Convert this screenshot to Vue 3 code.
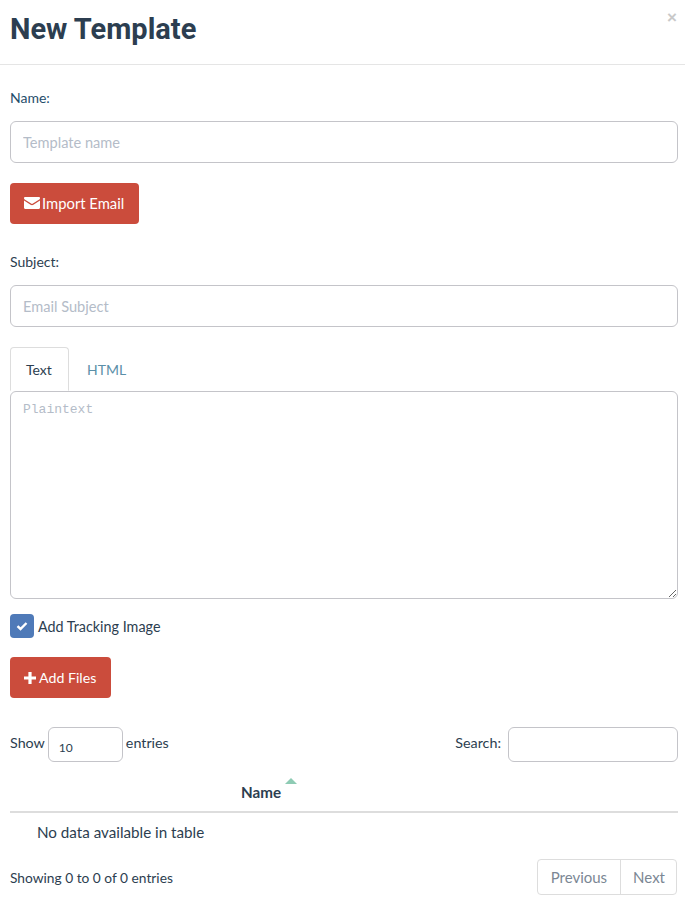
<template>
  <div class="modal">
    <!-- header -->
    <div class="modal-header">
      <h1 class="title">New Template</h1>
      <span class="close">×</span>
    </div>

    <div class="modal-body">
      <label class="label name-label">Name:</label>
      <input class="control" type="text" placeholder="Template name" />

      <button class="btn btn-import" type="button">
        <svg class="icon-mail" viewBox="0 0 16 12" width="16" height="12">
          <path d="M0 1.2C0 .5.5 0 1.2 0h13.6c.7 0 1.2.5 1.2 1.2 0 .5-.3.9-.7 1.2L8.9 6.6c-.6.4-1.2.4-1.8 0L.7 2.4C.3 2.1 0 1.7 0 1.2z" fill="#fff" />
          <path d="M0 3.4 6.6 7.8c.9.6 1.9.6 2.8 0L16 3.4v7.4c0 .7-.5 1.2-1.2 1.2H1.2C.5 12 0 11.5 0 10.8z" fill="#fff" />
        </svg>
        <span>Import Email</span>
      </button>

      <label class="label subject-label">Subject:</label>
      <input class="control" type="text" placeholder="Email Subject" />

      <!-- tabs -->
      <div class="tabs">
        <a class="tab active">Text</a>
        <a class="tab">HTML</a>
      </div>
      <textarea class="plaintext" placeholder="Plaintext"></textarea>

      <div class="check-row">
        <span class="checkbox">
          <svg viewBox="0 0 12 10" width="12" height="10">
            <path d="M1.5 5.2 4.5 8 10.5 2" fill="none" stroke="#fff" stroke-width="2.4" />
          </svg>
        </span>
        <span class="check-label">Add Tracking Image</span>
      </div>

      <button class="btn btn-files" type="button">
        <svg viewBox="0 0 12 12" width="12" height="12">
          <path d="M4.4 0h3.2v4.4H12v3.2H7.6V12H4.4V7.6H0V4.4h4.4z" fill="#fff" />
        </svg>
        <span>Add Files</span>
      </button>

      <!-- datatable -->
      <div class="dt-top">
        <div class="dt-length">
          <span class="dt-text">Show</span>
          <div class="length-box">10</div>
          <span class="dt-text">entries</span>
        </div>
        <div class="dt-search">
          <span class="dt-text">Search:</span>
          <input class="search-input" type="text" />
        </div>
      </div>

      <div class="table-head">
        <span class="th-name">Name<i class="sort-arrow"></i></span>
      </div>
      <div class="table-empty">No data available in table</div>

      <div class="dt-bottom">
        <span class="dt-info">Showing 0 to 0 of 0 entries</span>
        <div class="pager">
          <a class="page-link">Previous</a>
          <a class="page-link page-next">Next</a>
        </div>
      </div>
    </div>
  </div>
</template>

<script setup>
</script>

<style>
html, body {
  margin: 0;
  background: #fff;
}
</style>

<style scoped>
.modal {
  width: 685px;
  height: 903px;
  overflow: hidden;
  font-family: "Lato", "Noto Sans", sans-serif;
  font-size: 14px;
  color: #2c3e50;
}

.modal-header {
  display: flex;
  justify-content: space-between;
  height: 64px;
  padding: 0 8px 0 10px;
  border-bottom: 1px solid #e5e5e5;
}

.title {
  margin: 0;
  padding-top: 11px;
  font-family: "Roboto", sans-serif;
  font-size: 29px;
  line-height: 36px;
  font-weight: 700;
  color: #2c3e50;
}

.close {
  margin-top: 8px;
  font-family: "Liberation Sans", sans-serif;
  font-size: 17px;
  line-height: 20px;
  font-weight: 700;
  color: #c9c9c9;
}

.modal-body {
  display: flex;
  flex-direction: column;
  align-items: flex-start;
  padding: 0 7px 0 10px;
}

.label {
  line-height: 20px;
}

.name-label {
  margin: 23px 0 13px;
  color: #1f4e6b;
}

.subject-label {
  margin: 28px 0 13px;
}

.control {
  box-sizing: border-box;
  width: 668px;
  height: 42px;
  padding: 0 12px;
  border: 1px solid #c4c4c9;
  border-radius: 6px;
  outline: none;
  font: inherit;
  font-size: 14.6px;
  color: #2c3e50;
}

.control::placeholder {
  color: #b4bcc8;
  opacity: 1;
}

.btn {
  display: flex;
  align-items: center;
  gap: 3px;
  box-sizing: border-box;
  height: 41px;
  padding: 0 14px;
  border: none;
  border-radius: 4px;
  background: #cb4c3c;
  color: #fff;
  font: inherit;
  font-size: 14.2px;
}

.btn-import {
  width: 129px;
  margin-top: 20px;
  padding-bottom: 1px;
  font-size: 14.8px;
  gap: 2px;
}

.btn-files {
  width: 101px;
  margin-top: 19px;
}

.tabs {
  display: flex;
  width: 668px;
  height: 44px;
  margin-top: 20px;
}

.tab {
  box-sizing: border-box;
  height: 44px;
  padding: 0 17px;
  line-height: 44px;
  border: 1px solid transparent;
  color: #5b8fa8;
}

.tab.active {
  width: 59px;
  padding: 0 15px;
  border-color: #ddd;
  border-bottom-color: #fff;
  border-radius: 4px 4px 0 0;
  color: #2c3e50;
}

.plaintext {
  display: block;
  box-sizing: border-box;
  width: 668px;
  height: 208px;
  padding: 9px 12px;
  border: 1px solid #c4c4c9;
  border-radius: 6px;
  outline: none;
  font-family: "Liberation Mono", monospace;
  font-size: 13px;
  line-height: 18px;
}

.plaintext::placeholder {
  color: #b4bcc8;
  opacity: 1;
}

.check-row {
  display: flex;
  align-items: center;
  gap: 4px;
  margin-top: 15px;
  font-size: 14.35px;
}

.checkbox {
  display: flex;
  align-items: center;
  justify-content: center;
  width: 24px;
  height: 24px;
  border-radius: 4px;
  background: #4f7ab8;
}

.dt-top {
  display: flex;
  justify-content: space-between;
  align-items: center;
  width: 668px;
  height: 35px;
  margin-top: 29px;
}

.dt-length,
.dt-search {
  display: flex;
  align-items: center;
}

.dt-text {
  padding-bottom: 4px;
  font-size: 14.3px;
}

.length-box {
  box-sizing: border-box;
  width: 75px;
  height: 35px;
  margin: 0 3px;
  padding: 10px 0 0 10px;
  border: 1px solid #c4c4c9;
  border-radius: 6px;
  font-size: 12px;
  line-height: 20px;
}

.search-input {
  box-sizing: border-box;
  width: 170px;
  height: 35px;
  margin-left: 7px;
  border: 1px solid #c4c4c9;
  border-radius: 6px;
  outline: none;
}

.table-head {
  box-sizing: border-box;
  width: 668px;
  height: 51px;
  padding: 20px 0 0 231px;
  border-bottom: 2px solid #ddd;
}

.th-name {
  position: relative;
  font-size: 15.2px;
  font-weight: 700;
  line-height: 20px;
}

.sort-arrow {
  position: absolute;
  left: 100%;
  top: -5px;
  margin-left: 4px;
  border-left: 6px solid transparent;
  border-right: 6px solid transparent;
  border-bottom: 6px solid #8ecbb4;
}

.table-empty {
  padding: 9px 0 0 27px;
  font-size: 15.2px;
  line-height: 20px;
}

.dt-bottom {
  display: flex;
  justify-content: space-between;
  align-items: center;
  width: 667px;
  height: 36px;
  margin-top: 17px;
}

.dt-info {
  font-size: 13.75px;
}

.pager {
  display: flex;
  box-sizing: border-box;
  height: 36px;
  border: 1px solid #ddd;
  border-radius: 4px;
  font-size: 15px;
}

.page-link {
  padding: 0 13px;
  line-height: 34px;
  color: #7b8794;
}

.page-next {
  padding: 0 11px 0 12px;
  border-left: 1px solid #ddd;
}
</style>
